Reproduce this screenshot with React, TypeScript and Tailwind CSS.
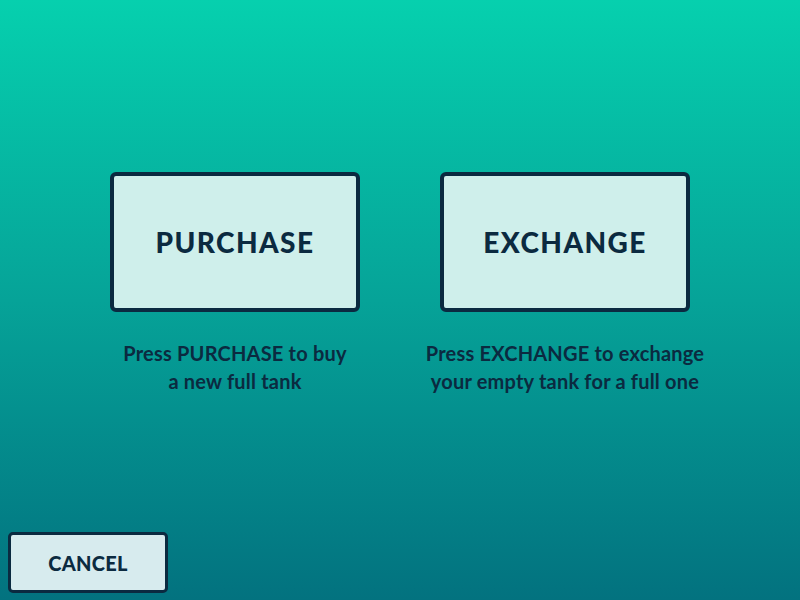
import React from 'react'

const options = [
  { label: 'PURCHASE', help: ['Press PURCHASE to buy', 'a new full tank'] },
  { label: 'EXCHANGE', help: ['Press EXCHANGE to exchange', 'your empty tank for a full one'] },
]

const App = () => {
  return (
    <div
      className="w-[800px] h-[600px] flex flex-col bg-gradient-to-b from-[#06d0ae] via-[#06a398] to-[#03727f] text-[#0b2a40]"
      style={{ fontFamily: 'Lato, "Open Sans", sans-serif' }}
    >
      <div className="flex justify-center gap-[80px] pt-[172px]">
        {options.map((o) => (
          <div key={o.label} className="flex flex-col items-center w-[250px]">
            <button
              type="button"
              className="w-[250px] h-[140px] bg-[#cfefeb] border-4 border-[#0b2a40] rounded-[6px] text-[28px] font-black tracking-[1.4px]"
            >
              {o.label}
            </button>
            <div className="mt-[27px] text-center text-[20px] font-bold leading-[28px] tracking-[0.2px] w-[340px]">
              {o.help.map((l) => (
                <div key={l}>{l}</div>
              ))}
            </div>
          </div>
        ))}
      </div>
      <div className="mt-auto pl-[8px] pb-[7px]">
        <button
          type="button"
          className="w-[160px] h-[61px] bg-[#d7ebee] border-[3px] border-[#0b2a40] rounded-[5px] text-[20px] font-black tracking-[0.3px]"
        >
          CANCEL
        </button>
      </div>
    </div>
  )
}

export default App
